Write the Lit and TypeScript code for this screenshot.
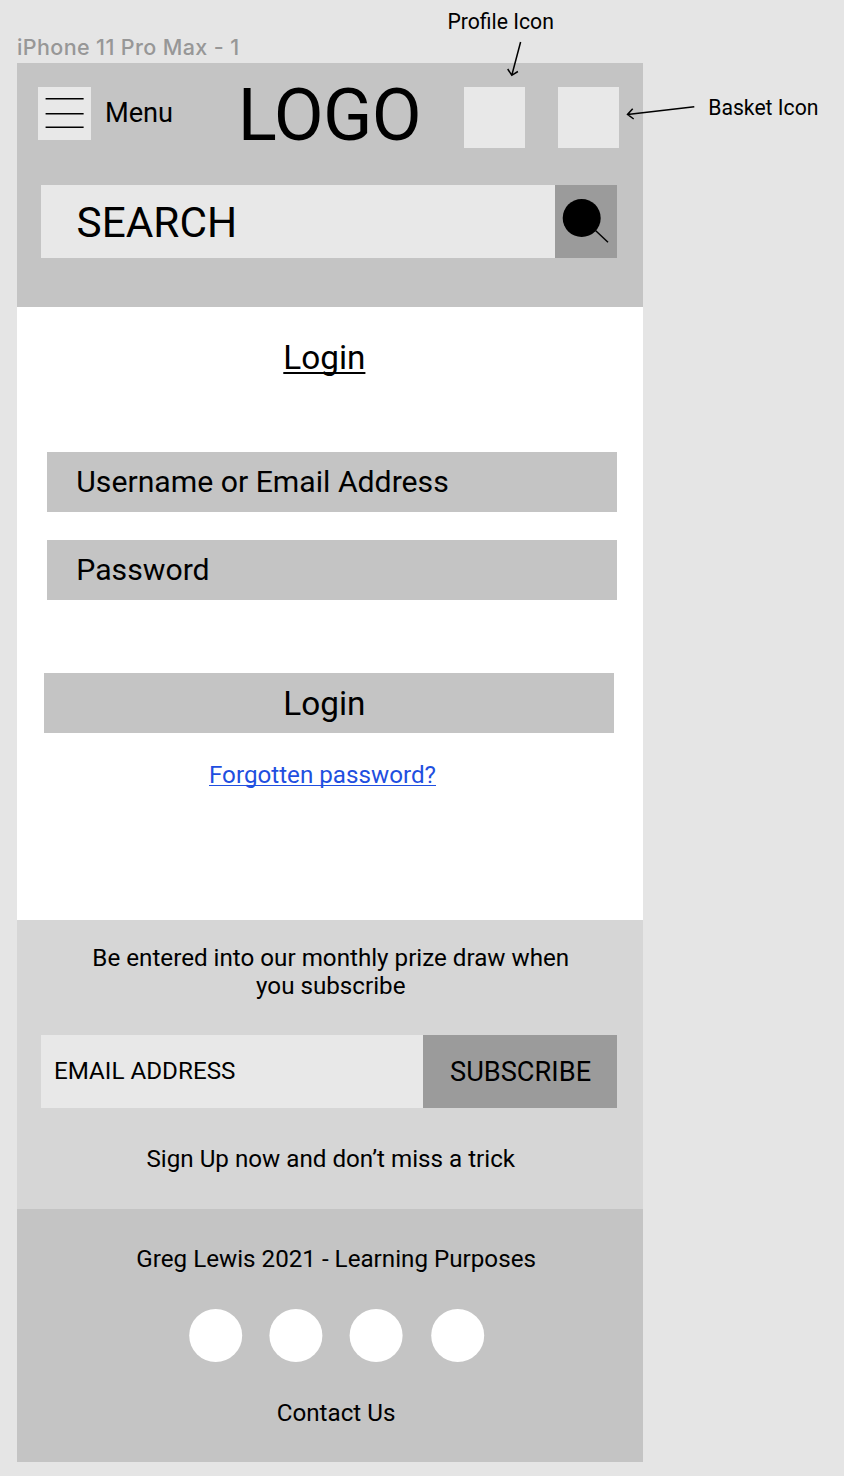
import { LitElement, html, css } from "lit";
import { customElement } from "lit/decorators.js";

@customElement("app-root")
export class AppRoot extends LitElement {
  static styles = css`
    :host {
      display: block;
      position: relative;
      box-sizing: border-box;
      width: 844px;
      height: 1476px;
      padding: 33px 0 0 17px;
      overflow: hidden;
      background: #e5e5e5;
      color: #000;
      font-family: Roboto, "Liberation Sans", sans-serif;
      font-size: 24.2px;
      line-height: 28px;
      white-space: nowrap;
    }
    .frame-name {
      height: 30px;
      line-height: 28px;
      font-family: Inter, sans-serif;
      font-size: 21.5px;
      font-weight: 450;
      letter-spacing: 0.38px;
      color: #979797;
    }
    .frame {
      width: 626px;
      height: 1399px;
      background: #fff;
    }
    header {
      box-sizing: border-box;
      height: 244px;
      padding: 24px 24px 0 21px;
      background: #c4c4c4;
    }
    .top {
      display: flex;
      align-items: flex-start;
      height: 98px;
    }
    .burger {
      width: 53px;
      height: 53px;
      background: #e8e8e8;
    }
    .menu {
      width: 135px;
      padding: 12px 0 0 14px;
      box-sizing: border-box;
      font-size: 27.2px;
    }
    .logo {
      width: 239px;
      padding: 1px 0 0 12px;
      box-sizing: border-box;
      font-size: 72.6px;
      line-height: 56px;
      letter-spacing: -0.7px;
    }
    .tile {
      width: 61px;
      height: 61px;
      background: #e8e8e8;
    }
    .tile + .tile {
      margin-left: 33px;
    }
    .search {
      display: flex;
      width: 576px;
      height: 73px;
      margin-left: 3px;
      background: #e8e8e8;
      line-height: 76px;
      font-size: 42.3px;
    }
    .search-text {
      flex: 1;
      padding-left: 35.6px;
    }
    .search-button {
      width: 62px;
      height: 73px;
      background: #9b9b9b;
    }
    svg {
      display: block;
    }
    main {
      box-sizing: border-box;
      height: 613px;
      padding: 33px 26px 0 27px;
    }
    h1 {
      margin: 0 0 76px 239.3px;
      font-size: 33.3px;
      font-weight: 400;
      line-height: 36px;
    }
    .underline {
      text-decoration: underline;
      text-decoration-skip-ink: none;
    }
    h1.underline {
      text-decoration-thickness: 1.5px;
      text-underline-offset: 3px;
    }
    .field {
      height: 60px;
      margin: 0 0 28px 3px;
      padding-left: 29.3px;
      background: #c4c4c4;
      font-size: 30.2px;
      line-height: 60px;
    }
    .login {
      height: 60px;
      width: 570px;
      box-sizing: border-box;
      margin-top: 73px;
      padding-left: 239.3px;
      background: #c4c4c4;
      font-size: 33.3px;
      line-height: 61px;
    }
    .forgot {
      display: block;
      margin: 28px 0 0 165px;
      color: #1f4fe0;
      text-decoration-thickness: 1px;
      text-underline-offset: 2px;
    }
    .subscribe {
      box-sizing: border-box;
      height: 289px;
      padding: 24px 26px 0 24px;
      background: #d6d6d6;
      text-align: center;
    }
    .prize {
      margin: 0;
      padding-left: 3.6px;
      height: 56px;
    }
    .email-row {
      display: flex;
      height: 73px;
      margin: 35px 0 37px;
      background: #e8e8e8;
      text-align: left;
      line-height: 72px;
    }
    .email {
      flex: 1;
      padding-left: 13px;
    }
    .subscribe-button {
      width: 194px;
      box-sizing: border-box;
      padding-left: 27px;
      background: #9b9b9b;
      font-size: 27.2px;
      line-height: 75px;
    }
    .signup {
      padding-left: 3.6px;
    }
    footer {
      box-sizing: border-box;
      height: 253px;
      padding-top: 36px;
      background: #c4c4c4;
    }
    .credit {
      margin-left: 119.3px;
    }
    .socials {
      display: flex;
      margin: 36px 0 37px 172px;
    }
    .contact {
      margin-left: 259.7px;
    }
    .note {
      position: absolute;
      font-size: 21.2px;
    }
    .note-profile {
      left: 447.4px;
      top: 8px;
    }
    .note-basket {
      left: 708.2px;
      top: 94px;
    }
    .arrows {
      position: absolute;
      left: 500px;
      top: 36px;
    }
  `;

  render() {
    return html`
      <div class="frame-name">iPhone 11 Pro Max - 1</div>
      <div class="frame">
        <header>
          <div class="top">
            <svg class="burger" viewBox="0 0 53 53" stroke="#000" stroke-width="1.5">
              <path d="M7.6 11.6H45.7M7.6 26.8H45.7M7.6 40.3H45.7" />
            </svg>
            <div class="menu">Menu</div>
            <div class="logo">LOGO</div>
            <div class="tile"></div>
            <div class="tile"></div>
          </div>
          <div class="search">
            <div class="search-text">SEARCH</div>
            <svg class="search-button" viewBox="0 0 62 73">
              <circle cx="26.7" cy="33" r="19" />
              <path d="M40.5 45.5L53 57.3" stroke="#000" stroke-width="1.5" />
            </svg>
          </div>
        </header>
        <main>
          <h1 class="underline">Login</h1>
          <div class="field">Username or Email Address</div>
          <div class="field">Password</div>
          <div class="login">Login</div>
          <a class="forgot underline">Forgotten password?</a>
        </main>
        <section class="subscribe">
          <p class="prize">Be entered into our monthly prize draw when<br />you subscribe</p>
          <div class="email-row">
            <div class="email">EMAIL ADDRESS</div>
            <div class="subscribe-button">SUBSCRIBE</div>
          </div>
          <div class="signup">Sign Up now and don’t miss a trick</div>
        </section>
        <footer>
          <div class="credit">Greg Lewis 2021 - Learning Purposes</div>
          <svg class="socials" width="296" height="53" fill="#fff">
            <circle cx="26.7" cy="26.5" r="26.5" />
            <circle cx="106.9" cy="26.5" r="26.5" />
            <circle cx="187.1" cy="26.5" r="26.5" />
            <circle cx="268.7" cy="26.5" r="26.5" />
          </svg>
          <div class="contact">Contact Us</div>
        </footer>
      </div>
      <div class="note note-profile">Profile Icon</div>
      <div class="note note-basket">Basket Icon</div>
      <svg class="arrows" width="200" height="90" fill="none" stroke="#000" stroke-width="1.5">
        <path d="M20.6 6L11.8 39.3M7.7 33L11.8 39.3L17.9 35.5" />
        <path d="M194.3 70.8L127.5 78.4M132.7 72.7L127.5 78.4L133.7 83" />
      </svg>
    `;
  }
}
